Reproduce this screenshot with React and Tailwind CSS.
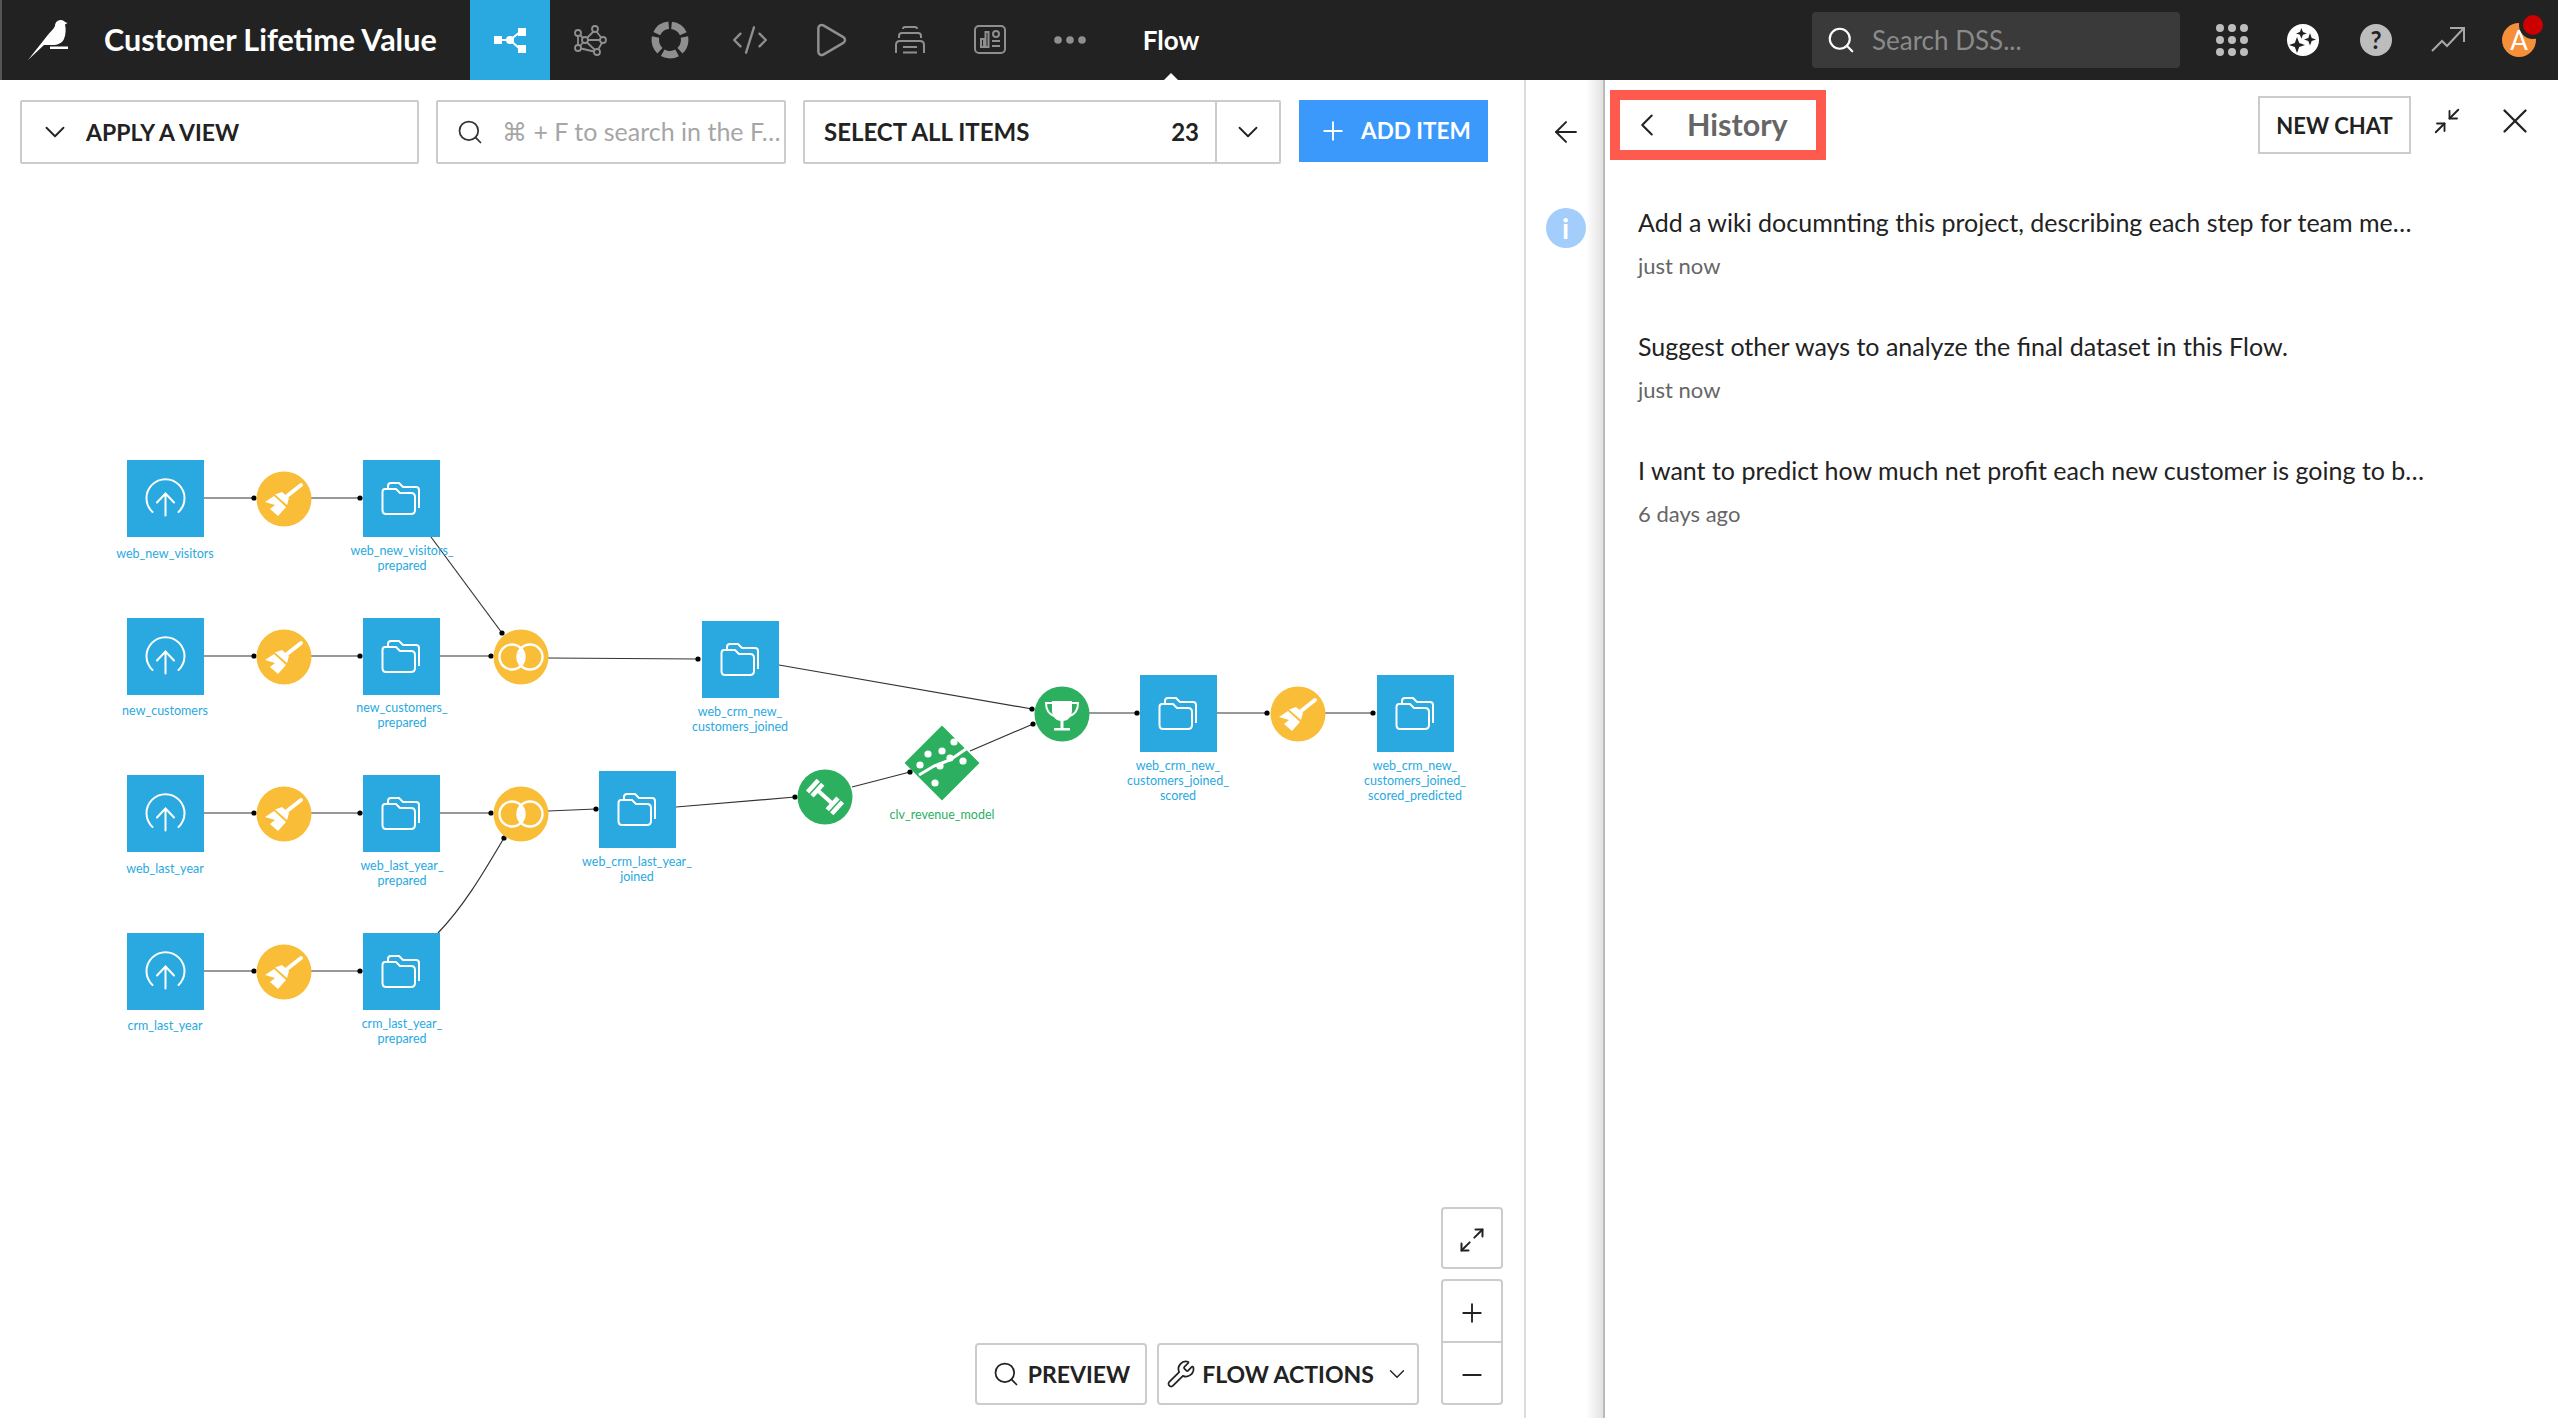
import { ArrowLeft, ChevronDown, ChevronLeft, CodeXml, Maximize2, Minimize2, Minus, Play, Plus, Search, Wrench, X } from 'lucide-react';

const font = "font-['Lato','Noto_Sans',sans-serif]";

const datasets = [
  { x: 127, y: 460, kind: 'upload' },
  { x: 127, y: 618, kind: 'upload' },
  { x: 127, y: 775, kind: 'upload' },
  { x: 127, y: 933, kind: 'upload' },
  { x: 363, y: 460 },
  { x: 363, y: 618 },
  { x: 363, y: 775 },
  { x: 363, y: 933 },
  { x: 702, y: 621 },
  { x: 599, y: 771 },
  { x: 1140, y: 675 },
  { x: 1377, y: 675 },
];

const edges = [
  [203, 498, 254, 498], [311, 498, 360, 498],
  [203, 656, 254, 656], [311, 656, 360, 656], [440, 656, 491, 656], [548, 658, 698, 659],
  [431, 537, 502, 633],
  [203, 813, 254, 813], [311, 813, 360, 813], [440, 813, 491, 813], [548, 811, 596, 809],
  [203, 971, 254, 971], [311, 971, 360, 971],
  [779, 665, 1032, 709], [676, 807, 795, 797], [852, 787, 910, 772], [970, 751, 1033, 724],
  [1089, 713, 1137, 713], [1217, 713, 1267, 713], [1325, 713, 1373, 713],
];

const brooms = [[284, 499], [284, 657], [284, 814], [284, 972], [1298, 714]];
const joins = [[521, 657], [521, 814]];

const labels = [
  { x: 165, y: 546, lines: ['web_new_visitors'] },
  { x: 402, y: 543, lines: ['web_new_visitors_', 'prepared'] },
  { x: 165, y: 703, lines: ['new_customers'] },
  { x: 402, y: 700, lines: ['new_customers_', 'prepared'] },
  { x: 740, y: 704, lines: ['web_crm_new_', 'customers_joined'] },
  { x: 165, y: 861, lines: ['web_last_year'] },
  { x: 402, y: 858, lines: ['web_last_year_', 'prepared'] },
  { x: 165, y: 1018, lines: ['crm_last_year'] },
  { x: 402, y: 1016, lines: ['crm_last_year_', 'prepared'] },
  { x: 637, y: 854, lines: ['web_crm_last_year_', 'joined'] },
  { x: 942, y: 807, lines: ['clv_revenue_model'], green: true },
  { x: 1178, y: 758, lines: ['web_crm_new_', 'customers_joined_', 'scored'] },
  { x: 1415, y: 758, lines: ['web_crm_new_', 'customers_joined_', 'scored_predicted'] },
];

const history = [
  { text: 'Add a wiki documnting this project, describing each step for team me…', when: 'just now' },
  { text: 'Suggest other ways to analyze the final dataset in this Flow.', when: 'just now' },
  { text: 'I want to predict how much net profit each new customer is going to b…', when: '6 days ago' },
];

function Bird() {
  return (
    <svg width="48" height="48" viewBox="24 18 48 48" fill="white">
      <path d="M28 62 L47 38 C50 34 53 32 55 28 C55 24 58 22 61 22 C63 22 64 23 65 24 L67.5 25 L65 26.5 C66 31 66 36 64 41 C62 45 58 47 52 47 L44 47 Z" />
      <rect x="50" y="48.5" width="18" height="2.5" />
    </svg>
  );
}

function FlowIcon() {
  return (
    <svg width="40" height="40" viewBox="0 0 40 40" fill="white">
      <rect x="4" y="16" width="8" height="8" />
      <rect x="28" y="8" width="8" height="8" />
      <rect x="28" y="25" width="8" height="8" />
      <circle cx="20" cy="20" r="4" />
      <path d="M10 20H20M20 20L30 12M20 20L30 29" stroke="white" strokeWidth="2" />
    </svg>
  );
}

const navStroke = { fill: 'none', stroke: '#8f8f8f', strokeWidth: 2 };

function LabIcon() {
  return (
    <svg width="40" height="40" viewBox="0 0 40 40" {...navStroke} strokeWidth="1.8">
      <circle cx="8" cy="13" r="3" />
      <circle cx="8" cy="28" r="3" />
      <circle cx="25" cy="9" r="3" />
      <circle cx="33" cy="20" r="3" />
      <circle cx="27" cy="32" r="3" />
      <circle cx="15" cy="20" r="3" />
      <path d="M8 16V25M10 15L13 18M17 18L23.5 11.5M26.5 11.5L31.5 18M18 20H30M32 23L28 29.5M11 28.5L24 31.5M10 26L13 22.5M17 22.5L25 30" />
    </svg>
  );
}

function CycleIcon() {
  return (
    <svg width="40" height="40" viewBox="0 0 40 40" fill="none" stroke="#8f8f8f" strokeWidth="7.5">
      <circle cx="20" cy="20" r="14.7" strokeDasharray="15 3.47" transform="rotate(-84 20 20)" />
    </svg>
  );
}

function Backpack() {
  return (
    <svg width="40" height="40" viewBox="0 0 40 40" {...navStroke}>
      <path d="M6 33V25Q6 21 10 21H30Q34 21 34 25V33" />
      <path d="M9 18V16Q9 13 12 13H28Q31 13 31 16V18" />
      <path d="M13 9Q13 7 15 7H25Q27 7 27 9" />
      <path d="M13 27H27M13 32.5H27" />
    </svg>
  );
}

function DashIcon() {
  return (
    <svg width="40" height="40" viewBox="0 0 40 40" {...navStroke}>
      <rect x="5" y="6" width="30" height="27" rx="4" />
      <rect x="11" y="19" width="3" height="8" />
      <rect x="15.5" y="12" width="3" height="15" />
      <circle cx="26" cy="14" r="3" />
      <path d="M22 21H30M22 26H30" />
    </svg>
  );
}

function MoreIcon() {
  return (
    <svg width="40" height="12" viewBox="0 0 40 12" fill="#8f8f8f">
      <circle cx="8" cy="6" r="3.8" />
      <circle cx="20" cy="6" r="3.8" />
      <circle cx="32" cy="6" r="3.8" />
    </svg>
  );
}

function AppsIcon() {
  const dots = [8, 20, 32];
  return (
    <svg width="40" height="40" viewBox="0 0 40 40" fill="#bdbdbd">
      {dots.map((y) => dots.map((x) => <circle key={x + '-' + y} cx={x} cy={y} r="4" />))}
    </svg>
  );
}

function SparkleIcon() {
  return (
    <svg width="32" height="32" viewBox="0 0 32 32">
      <circle cx="16" cy="16" r="16" fill="white" />
      <path d="M14.5 4.5L16.2 9L20.5 10.5L16.2 12L14.5 16.5L12.8 12L8.5 10.5L12.8 9Z" fill="#222" transform="translate(0 0) scale(0.9) translate(1.5 0)" />
      <path d="M23 9L24.7 14L29 15.5L24.7 17L23 21.5L21.3 17L17 15.5L21.3 14Z" fill="#222" />
      <path d="M10 13L12.2 19L18 21L12.2 23L10 29L7.8 23L2 21L7.8 19Z" fill="#222" />
    </svg>
  );
}

function TrendIcon() {
  return (
    <svg width="36" height="28" viewBox="0 0 36 28" fill="none" stroke="#a8a8a8" strokeWidth="2">
      <path d="M2 25L12 15L17 20L33 3" />
      <path d="M20 2H34V16" />
    </svg>
  );
}

function Upload({ x, y }) {
  return (
    <g transform={`translate(${x} ${y})`} fill="none" stroke="white" strokeWidth="2" strokeLinecap="round">
      <path d="M-13 13.5A19 19 0 1 1 13 13.5" />
      <path d="M0 17V-4M-8.5 4L0 -5L8.5 4" />
    </g>
  );
}

function Folder({ x, y }) {
  return (
    <g transform={`translate(${x} ${y})`} fill="none" stroke="white" strokeWidth="2">
      <path d="M19.5 32Q19.5 29 22 29H33L37 33H48Q52 33 52 37V50Q52 54 48 54H23Q19.5 54 19.5 50Z" />
      <path d="M25 28V26Q25 23 28 23H36L40 27H53Q56 27 56 30V48" />
    </g>
  );
}

function Broom({ x, y }) {
  return (
    <g transform={`translate(${x} ${y})`}>
      <circle r="27.5" fill="#f9bd38" />
      <path d="M3 -3L17 -14" stroke="white" strokeWidth="4" strokeLinecap="round" />
      <path d="M-9 -4.5L-2 -7L5 -1L3 6Z" fill="white" />
      <path d="M-19 3L-10 -3L2 8L-6 17L-14 10L-9 6Z" fill="white" />
    </g>
  );
}

function Join({ x, y }) {
  return (
    <g transform={`translate(${x} ${y})`}>
      <circle r="27.5" fill="#f9bd38" />
      <path d="M0 -9A12.5 12.5 0 0 0 0 9A12.5 12.5 0 0 0 0 -9Z" fill="white" />
      <circle cx="-9" r="12.5" fill="none" stroke="white" strokeWidth="2.4" />
      <circle cx="9" r="12.5" fill="none" stroke="white" strokeWidth="2.4" />
    </g>
  );
}

function Train({ x, y }) {
  return (
    <g transform={`translate(${x} ${y})`}>
      <circle r="27.5" fill="#2cb05f" />
      <g transform="rotate(42)" fill="white">
        <rect x="-9" y="-2" width="18" height="4" />
        <rect x="-18.5" y="-8" width="4.5" height="16" />
        <rect x="-12.5" y="-8" width="4.5" height="16" />
        <rect x="8" y="-8" width="4.5" height="16" />
        <rect x="14" y="-8" width="4.5" height="16" />
      </g>
    </g>
  );
}

function Model({ x, y }) {
  const dots = [[-22, 2], [-14, -9], [0, -12], [12, -21], [21, -2], [8, -5], [-2, 3], [-7, 20]];
  return (
    <g transform={`translate(${x} ${y})`}>
      <path d="M0 -37.5L37.5 0L0 37.5L-37.5 0Z" fill="#2cb05f" />
      <path d="M-23 12L-8 3L0 0L8 -3L24 -14" stroke="white" strokeWidth="3" fill="none" />
      {dots.map(([cx, cy]) => <circle key={cx + '-' + cy} cx={cx} cy={cy} r="3.6" fill="white" />)}
    </g>
  );
}

function Trophy({ x, y }) {
  return (
    <g transform={`translate(${x} ${y})`}>
      <circle r="27.5" fill="#2cb05f" />
      <path d="M-10 -13H10V-4C10 4 5 7 0 7C-5 7 -10 4 -10 -4Z" fill="white" />
      <path d="M-10 -11H-16C-16 -4 -13 0 -8 2M10 -11H16C16 -4 13 0 8 2" fill="none" stroke="white" strokeWidth="2" />
      <rect x="-1.5" y="6" width="3" height="9" fill="white" />
      <rect x="-8" y="14" width="16" height="2.5" fill="white" />
    </g>
  );
}

function FlowGraph() {
  return (
    <svg className="absolute inset-0" width="1524" height="1338" viewBox="0 80 1524 1338">
      {edges.map(([x1, y1, x2, y2]) => (
        <g key={x1 + '-' + y1}>
          <line x1={x1} y1={y1} x2={x2} y2={y2} stroke="#333" strokeWidth="1.2" />
          <circle cx={x2} cy={y2} r="2.6" fill="#000" />
        </g>
      ))}
      <path d="M438 933C465 905 485 870 504 838" fill="none" stroke="#333" strokeWidth="1.2" />
      <circle cx="504" cy="838" r="2.6" fill="#000" />
      {datasets.map((d) => (
        <g key={d.x + '-' + d.y}>
          <rect x={d.x} y={d.y} width="77" height="77" fill="#29a9df" />
          {d.kind === 'upload' ? <Upload x={d.x + 38.5} y={d.y + 38.5} /> : <Folder x={d.x} y={d.y} />}
        </g>
      ))}
      {brooms.map(([x, y]) => <Broom key={x + '-' + y} x={x} y={y} />)}
      {joins.map(([x, y]) => <Join key={x + '-' + y} x={x} y={y} />)}
      <Train x={825} y={797} />
      <Model x={942} y={763} />
      <Trophy x={1062} y={714} />
    </svg>
  );
}

function NodeLabel({ x, y, lines, green }) {
  return (
    <div
      className={`absolute -translate-x-1/2 text-center text-[12.5px] leading-[15px] whitespace-nowrap ${green ? 'text-[#2cb05f]' : 'text-[#29a9df]'}`}
      style={{ left: x, top: y - 80 }}
    >
      {lines.map((line) => <div key={line}>{line}</div>)}
    </div>
  );
}

function Toolbar() {
  return (
    <div className="relative flex h-[64px] mt-[20px] ml-[20px] text-[#222] text-[24px] font-bold">
      <div className="w-[399px] flex items-center border-2 border-[#ccc] rounded-[2px] pl-[16px] bg-white">
        <ChevronDown size={34} strokeWidth={1.3} />
        <span className="ml-[14px] text-[23px]">APPLY A VIEW</span>
      </div>
      <div className="w-[350px] ml-[17px] flex items-center border-2 border-[#ccc] rounded-[2px] pl-[18px] bg-white">
        <Search size={28} strokeWidth={1.5} className="text-[#333] shrink-0" />
        <span className="ml-[18px] text-[25px] font-normal text-[#a6a6a6] whitespace-nowrap">⌘ + F to search in the F…</span>
      </div>
      <div className="w-[478px] ml-[17px] flex items-center border-2 border-[#ccc] rounded-[2px] pl-[19px] bg-white">
        <span className="flex-1">SELECT ALL ITEMS</span>
        <span className="mr-[16px]">23</span>
        <div className="w-[64px] h-full flex items-center justify-center border-l-2 border-[#ccc]">
          <ChevronDown size={34} strokeWidth={1.3} />
        </div>
      </div>
      <div className="w-[189px] h-[62px] ml-[18px] flex items-center pl-[19px] bg-[#3b99fc] text-white">
        <Plus size={30} strokeWidth={1.5} />
        <span className="ml-[13px] text-[22.5px]">ADD ITEM</span>
      </div>
    </div>
  );
}

function FlowControls() {
  return (
    <>
      <div className="absolute left-[975px] bottom-[13px] flex gap-[10px] text-[#222] text-[23px] font-bold">
        <div className="w-[172px] h-[62px] flex items-center justify-center gap-[8px] border-2 border-[#ccc] rounded-[4px] bg-white">
          <Search size={28} strokeWidth={1.5} />
          PREVIEW
        </div>
        <div className="w-[262px] h-[62px] flex items-center justify-center gap-[6px] border-2 border-[#ccc] rounded-[4px] bg-white">
          <Wrench size={30} strokeWidth={1.4} />
          FLOW ACTIONS
          <ChevronDown size={26} strokeWidth={1.3} className="ml-[4px]" />
        </div>
      </div>
      <div className="absolute left-[1441px] bottom-[13px] w-[62px] flex flex-col text-[#222]">
        <div className="h-[62px] pt-[4px] flex items-center justify-center border-2 border-[#ccc] rounded-[4px] bg-white mb-[10px]">
          <Maximize2 size={28} strokeWidth={1.7} />
        </div>
        <div className="h-[64px] pt-[4px] flex items-center justify-center border-2 border-[#ccc] rounded-t-[4px] bg-white">
          <Plus size={30} strokeWidth={1.5} />
        </div>
        <div className="h-[62px] pt-[4px] flex items-center justify-center border-2 border-t-0 border-[#ccc] rounded-b-[4px] bg-white">
          <Minus size={30} strokeWidth={1.5} />
        </div>
      </div>
    </>
  );
}

export default function App() {
  return (
    <div className={`w-[2558px] h-[1418px] flex flex-col overflow-hidden bg-white ${font}`}>
      <header className="h-[80px] shrink-0 flex items-center bg-[#222] border-l-2 border-[#555]">
        <div className="ml-[22px]"><Bird /></div>
        <div className="ml-[32px] w-[366px] text-white text-[30.5px] font-bold whitespace-nowrap">Customer Lifetime Value</div>
        <div className="w-[80px] h-full flex items-center justify-center bg-[#29a9df]"><FlowIcon /></div>
        <div className="w-[80px] flex justify-center"><LabIcon /></div>
        <div className="w-[80px] flex justify-center"><CycleIcon /></div>
        <div className="w-[80px] flex justify-center text-[#8f8f8f]"><CodeXml size={38} strokeWidth={1.5} /></div>
        <div className="w-[80px] flex justify-center text-[#8f8f8f]"><Play size={40} strokeWidth={1.5} /></div>
        <div className="w-[80px] flex justify-center"><Backpack /></div>
        <div className="w-[80px] flex justify-center"><DashIcon /></div>
        <div className="w-[80px] flex justify-center"><MoreIcon /></div>
        <div className="relative w-[122px] h-full flex items-center justify-center text-white text-[26px] font-bold">
          Flow
          <div className="absolute bottom-0 left-1/2 -translate-x-1/2 w-0 h-0 border-x-[7px] border-x-transparent border-b-[7px] border-b-white" />
        </div>
        <div className="ml-[580px] w-[368px] h-[56px] flex items-center pl-[14px] bg-[#3a3a3a] rounded-[4px]">
          <Search size={30} strokeWidth={1.7} className="text-white" />
          <span className="ml-[16px] text-[#8a8a8a] text-[26px]">Search DSS...</span>
        </div>
        <div className="ml-[32px]"><AppsIcon /></div>
        <div className="ml-[35px]"><SparkleIcon /></div>
        <div className="ml-[41px] w-[32px] h-[32px] flex items-center justify-center rounded-full bg-[#bdbdbd] text-[#222] text-[24px] font-bold">?</div>
        <div className="ml-[38px]"><TrendIcon /></div>
        <div className="relative ml-[36px] w-[34px] h-[34px] flex items-center justify-center rounded-full bg-[#f58f3a] text-white text-[26px]">
          A
          <div className="absolute -top-[12px] -right-[11px] w-[20px] h-[20px] rounded-full bg-[#c00] border-[4px] border-[#222] box-content" />
        </div>
      </header>

      <div className="flex-1 flex min-h-0">
        <section className="relative w-[1524px] shrink-0">
          <FlowGraph />
          {labels.map((l) => <NodeLabel key={l.x + '-' + l.y} {...l} />)}
          <Toolbar />
          <FlowControls />
        </section>

        <div className="w-[81px] shrink-0 flex flex-col items-center pl-[2px] border-x-2 border-l-[#ddd] border-r-[#bbb] bg-gradient-to-r from-white from-[78%] to-[#e2e2e2] text-[#222]">
          <ArrowLeft size={34} strokeWidth={1.4} className="mt-[35px]" />
          <div className="mt-[59px] w-[40px] h-[40px] flex items-center justify-center rounded-full bg-[#a3cdfb] text-white text-[28px] font-bold">i</div>
        </div>

        <aside className="flex-1 flex flex-col min-w-0">
          <div className="h-[110px] flex items-start">
            <div className="mt-[10px] ml-[5px] w-[216px] h-[70px] flex items-center border-[10px] border-[#ff5a4e] text-[#666]">
              <ChevronLeft size={38} strokeWidth={1.3} className="ml-[8px] text-[#222]" />
              <span className="ml-[21px] text-[30.5px] font-bold">History</span>
            </div>
            <div className="mt-[16px] ml-[432px] w-[153px] h-[58px] flex items-center justify-center border-2 border-[#ccc] text-[#222] text-[22px] font-bold">NEW CHAT</div>
            <Minimize2 size={30} strokeWidth={1.5} className="mt-[26px] ml-[21px] text-[#222]" />
            <X size={42} strokeWidth={1.3} className="mt-[20px] ml-[32px] text-[#222]" />
          </div>
          <div className="mt-[12px] pl-[33px] flex flex-col gap-[30px]">
            {history.map((item) => (
              <div key={item.text} className="h-[94px]">
                <div className="h-[40px] leading-[40px] text-[#222] text-[25px] whitespace-nowrap">{item.text}</div>
                <div className="mt-[10px] text-[#666] text-[22px] leading-[28px]">{item.when}</div>
              </div>
            ))}
          </div>
        </aside>
      </div>
    </div>
  );
}
